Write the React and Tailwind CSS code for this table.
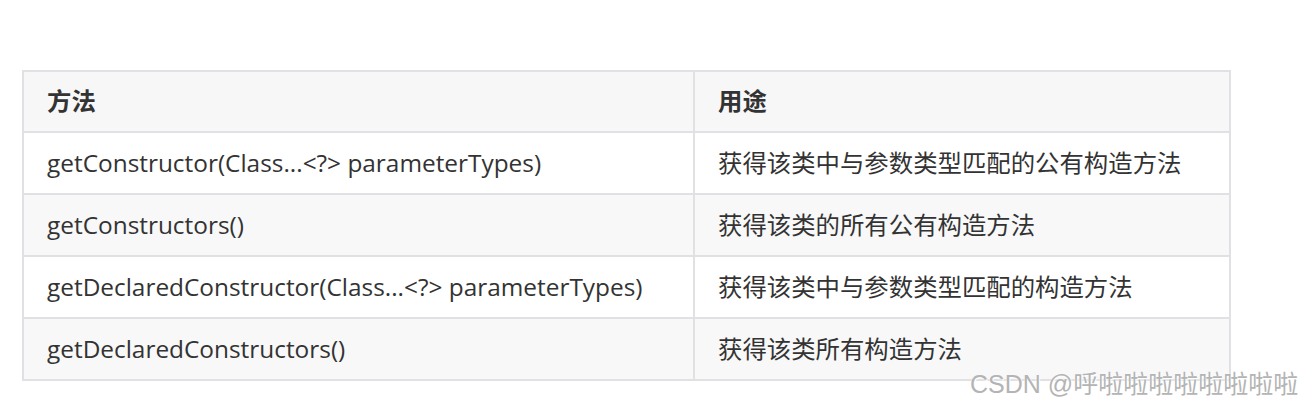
import React from "react";

const rows = [
  ["getConstructor(Class...<?> parameterTypes)", "获得该类中与参数类型匹配的公有构造方法"],
  ["getConstructors()", "获得该类的所有公有构造方法"],
  ["getDeclaredConstructor(Class...<?> parameterTypes)", "获得该类中与参数类型匹配的构造方法"],
  ["getDeclaredConstructors()", "获得该类所有构造方法"],
];

const font = { fontFamily: '"Open Sans", "Noto Sans CJK SC", sans-serif' };

export default function App() {
  return (
    <div className="relative h-[407px] w-[1300px] overflow-hidden bg-white text-[#333]" style={font}>
      <div className="pl-[22px] pt-[70px]">
        <table className="w-[1209px] border-collapse text-[24.4px]">
          <thead>
            <tr className="bg-[#f7f7f8]">
              <th className="h-[61px] w-[671px] border-2 border-[#e1e1e5] px-[23px] text-left font-bold">方法</th>
              <th className="h-[61px] border-2 border-[#e1e1e5] px-[23px] text-left font-bold">用途</th>
            </tr>
          </thead>
          <tbody>
            {rows.map(([m, d], i) => (
              <tr key={m} className={i % 2 === 1 ? "bg-[#f8f8f9]" : "bg-white"}>
                <td className="h-[62px] border-2 border-[#e1e1e5] px-[23px]">{m}</td>
                <td className="h-[62px] border-2 border-[#e1e1e5] px-[23px]">{d}</td>
              </tr>
            ))}
          </tbody>
        </table>
      </div>
      <div
        className="absolute left-[970px] top-[366px] text-[25px] text-[#b4b4b4] [text-shadow:0_0_2px_#fff,1px_1px_1px_#fff]"
        style={{ fontFamily: '"Liberation Sans", "Noto Sans CJK SC", sans-serif' }}
      >
        CSDN @呼啦啦啦啦啦啦啦啦
      </div>
    </div>
  );
}
